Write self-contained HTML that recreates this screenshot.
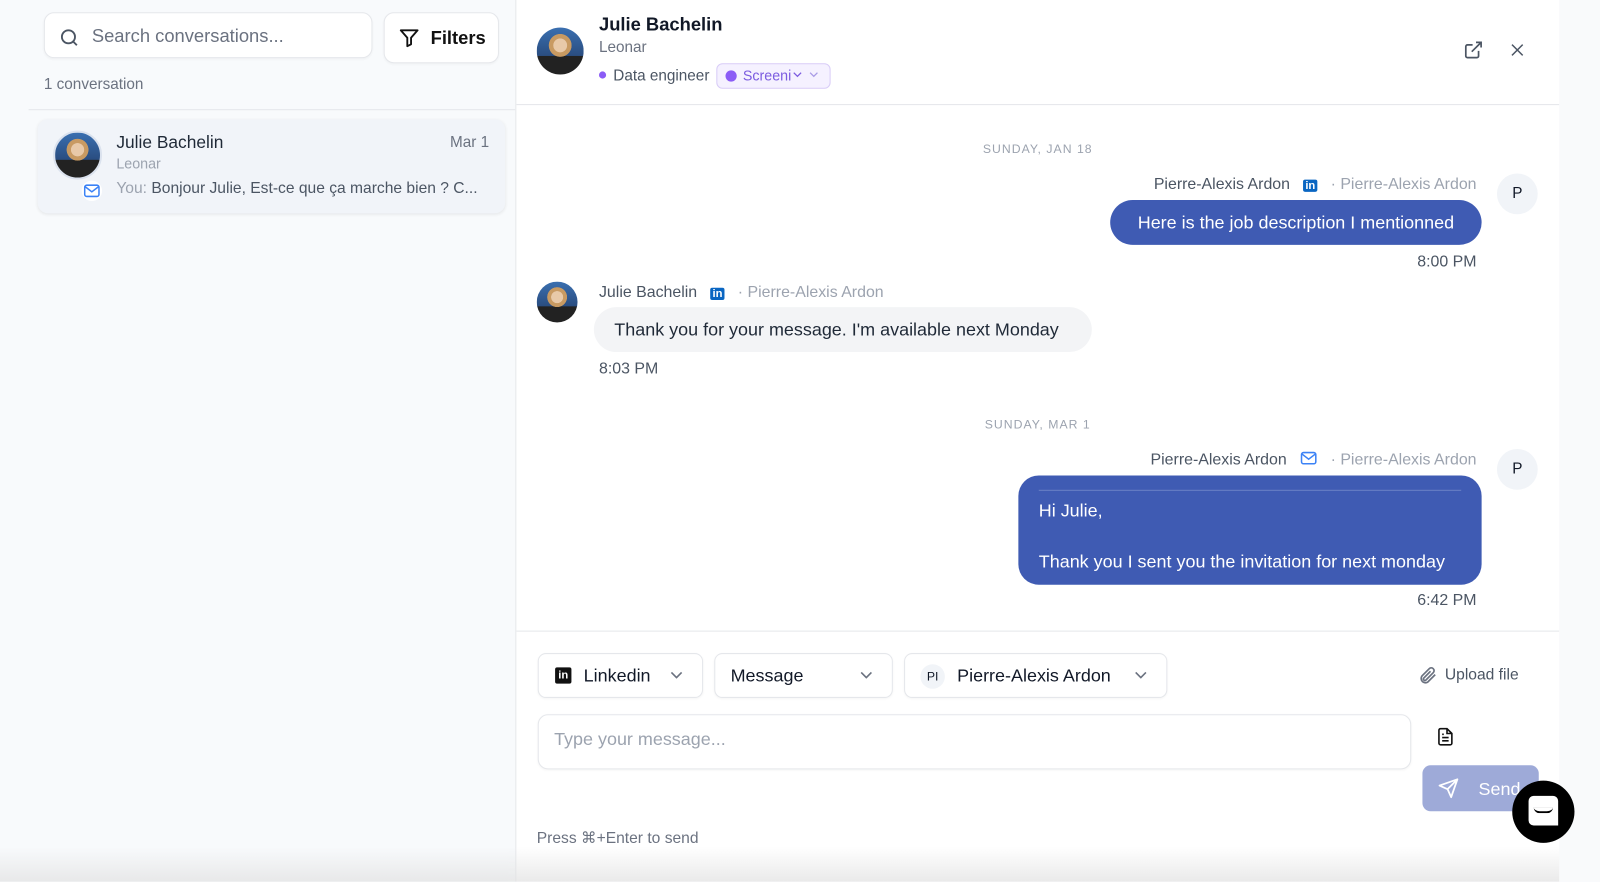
<!DOCTYPE html>
<html><head><meta charset="utf-8"><style>
*{box-sizing:border-box;margin:0;padding:0}
body{width:1600px;height:864px;overflow:hidden;background:#f8fafc;font-family:"Liberation Sans",sans-serif;color:#111827}
#w{position:absolute;left:0;top:0;width:1568px;height:847px;transform:scale(1.0204);transform-origin:0 0}
.a{position:absolute}
.av{border-radius:50%;background:radial-gradient(circle at 50% 38%,#e8c9a8 0 18%,#c89a62 19% 30%,transparent 31%),linear-gradient(#3a6fb0,#2a4d80 60%,#222 61%);}
.g{color:#6b7280}
.btn{border:1px solid #e5e7eb;border-radius:8px;background:#fff;box-shadow:0 1px 2px rgba(0,0,0,.04)}
.bub{background:#3f5bb3;color:#fff;font-size:17.6px}
.meta{font-size:15.6px;color:#4b5563}
.meta span{color:#9ca3af}
</style></head><body><div id="w">
<div class="a btn" style="left:43px;top:12px;width:322px;height:45px;border-radius:10px"></div>
<svg class="a" style="left:57px;top:26px" width="22" height="22" viewBox="0 0 24 24" fill="none" stroke="#4b5563" stroke-width="2"><circle cx="11" cy="11" r="7"/><path d="M16 16l4 4"/></svg>
<div class="a g" style="left:90px;top:25px;font-size:18px">Search conversations...</div>
<div class="a btn" style="left:376px;top:12px;width:113px;height:50px;border-radius:10px"></div>
<svg class="a" style="left:390px;top:26px" width="22" height="22" viewBox="0 0 24 24" fill="none" stroke="#111" stroke-width="2" stroke-linejoin="round"><path d="M3 4h18l-7 8v7l-4 2v-9z"/></svg>
<div class="a" style="left:422px;top:27px;font-size:18px;font-weight:bold;color:#111">Filters</div>
<div class="a g" style="left:43px;top:74px;font-size:15px">1 conversation</div>
<div class="a" style="left:28px;top:107px;width:477px;height:1px;background:#e5e7eb"></div>
<div class="a" style="left:37px;top:117px;width:458px;height:92px;background:#f1f4f9;border-radius:10px;box-shadow:0 1px 3px rgba(0,0,0,.08)"></div>
<div class="a av" style="left:52px;top:128px;width:48px;height:48px;border:2px solid #dbe2ee"></div>
<div class="a" style="left:80px;top:177px;width:20px;height:20px;border-radius:50%;background:#fff"></div>
<svg class="a" style="left:82px;top:180px" width="16" height="14" viewBox="0 0 16 14" fill="none" stroke="#3b82f6" stroke-width="1.5"><rect x="1" y="1.5" width="14" height="11" rx="2"/><path d="M1.5 3l6.5 5 6.5-5"/></svg>
<div class="a" style="left:114px;top:130px;font-size:17px;color:#1f2937">Julie Bachelin</div>
<div class="a g" style="left:441px;top:131px;font-size:15px">Mar 1</div>
<div class="a" style="left:114px;top:152px;font-size:14px;color:#9ca3af">Leonar</div>
<div class="a" style="left:114px;top:176px;font-size:15.3px;color:#4b5563"><span style="color:#9ca3af">You:</span> Bonjour Julie, Est-ce que ça marche bien ? C...</div>
<div class="a" style="left:505px;top:0;width:1023px;height:864px;background:#fff;border-left:1px solid #e5e7eb"></div>
<div class="a" style="left:1528px;top:0;width:40px;height:864px;background:#f9fafb"></div>
<div class="a av" style="left:526px;top:27px;width:46px;height:46px"></div>
<div class="a" style="left:587px;top:14px;font-size:18px;font-weight:bold">Julie Bachelin</div>
<div class="a g" style="left:587px;top:38px;font-size:15px">Leonar</div>
<div class="a" style="left:587px;top:70px;width:7px;height:7px;border-radius:50%;background:#8b5cf6"></div>
<div class="a g" style="left:601px;top:66px;font-size:15px;color:#4b5563">Data engineer</div>
<div class="a" style="left:702px;top:62px;width:112px;height:25px;border:1px solid #d8ccf7;background:#f5f1ff;border-radius:6px"></div>
<div class="a" style="left:711px;top:69px;width:11px;height:11px;border-radius:50%;background:#8b5cf6"></div>
<div class="a" style="left:728px;top:66px;font-size:14px;color:#7c5ce0">Screeni</div>
<svg class="a" style="left:777px;top:70px" width="9" height="6" viewBox="0 0 10 6" fill="none" stroke="#7c5ce0" stroke-width="1.4"><path d="M1 1l4 4 4-4"/></svg>
<svg class="a" style="left:793px;top:70px" width="9" height="6" viewBox="0 0 10 6" fill="none" stroke="#a99be6" stroke-width="1.4"><path d="M1 1l4 4 4-4"/></svg>
<svg class="a" style="left:1434px;top:39px" width="20" height="20" viewBox="0 0 24 24" fill="none" stroke="#4b5563" stroke-width="2"><path d="M18 13v6a2 2 0 0 1-2 2H5a2 2 0 0 1-2-2V8a2 2 0 0 1 2-2h6M15 3h6v6M10 14L21 3"/></svg>
<svg class="a" style="left:1478px;top:40px" width="18" height="18" viewBox="0 0 24 24" fill="none" stroke="#4b5563" stroke-width="2"><path d="M5 5l14 14M19 5L5 19"/></svg>
<div class="a" style="left:506px;top:102px;width:1022px;height:1px;background:#e5e7eb"></div>
<div class="a" style="left:506px;top:139px;width:1022px;text-align:center;font-size:12px;letter-spacing:1px;color:#9ca3af">SUNDAY, JAN 18</div>
<div class="a meta" style="right:121px;top:172px">Pierre-Alexis Ardon &nbsp;&nbsp;<b style="background:#0a66c2;color:#fff;font-size:11px;padding:0 2px;border-radius:2px">in</b> &nbsp;&nbsp;<span>· Pierre-Alexis Ardon</span></div>
<div class="a" style="left:1467px;top:170px;width:40px;height:40px;border-radius:50%;background:#f1f4f8;text-align:center;line-height:40px;font-size:15px">P</div>
<div class="a bub" style="left:1088px;top:196px;width:364px;height:44px;border-radius:22px;line-height:44px;text-align:center">Here is the job description I mentionned</div>
<div class="a meta" style="right:121px;top:248px">8:00 PM</div>
<div class="a av" style="left:526px;top:276px;width:40px;height:40px"></div>
<div class="a meta" style="left:587px;top:278px">Julie Bachelin &nbsp;&nbsp;<b style="background:#0a66c2;color:#fff;font-size:11px;padding:0 2px;border-radius:2px">in</b> &nbsp;&nbsp;<span>· Pierre-Alexis Ardon</span></div>
<div class="a" style="left:582px;top:301px;width:488px;height:44px;border-radius:22px;background:#f3f4f6;line-height:44px;padding-left:20px;font-size:17.6px;color:#1f2937">Thank you for your message. I'm available next Monday</div>
<div class="a meta" style="left:587px;top:353px">8:03 PM</div>
<div class="a" style="left:506px;top:409px;width:1022px;text-align:center;font-size:12px;letter-spacing:1px;color:#9ca3af">SUNDAY, MAR 1</div>
<div class="a meta" style="right:121px;top:442px">Pierre-Alexis Ardon &nbsp;&nbsp;<svg width="17" height="14" viewBox="0 0 16 14" fill="none" stroke="#3b82f6" stroke-width="1.5" style="vertical-align:-1px"><rect x="1" y="1.5" width="14" height="11" rx="2"/><path d="M1.5 3l6.5 5 6.5-5"/></svg> &nbsp;&nbsp;<span>· Pierre-Alexis Ardon</span></div>
<div class="a" style="left:1467px;top:440px;width:40px;height:40px;border-radius:50%;background:#f1f4f8;text-align:center;line-height:40px;font-size:15px">P</div>
<div class="a bub" style="left:998px;top:466px;width:454px;height:107px;border-radius:20px;padding:22px 0 0 20px;line-height:25px">
<div class="a" style="left:20px;top:14px;right:20px;height:1px;background:#6a81c6"></div>Hi Julie,<br><br>Thank you I sent you the invitation for next monday</div>
<div class="a meta" style="right:121px;top:580px">6:42 PM</div>
<div class="a" style="left:506px;top:618px;width:1022px;height:1px;background:#e5e7eb"></div>
<div class="a btn" style="left:527px;top:640px;width:162px;height:44px"></div>
<div class="a" style="left:544px;top:654px;width:16px;height:16px;background:#111;border-radius:2px;color:#fff;font-size:11px;font-weight:bold;line-height:17px;text-align:center">in</div>
<div class="a" style="left:572px;top:652px;font-size:17.6px">Linkedin</div>
<svg class="a" style="left:657px;top:658px" width="12" height="7" viewBox="0 0 12 7" fill="none" stroke="#6b7280" stroke-width="1.6"><path d="M1 1l5 5 5-5"/></svg>
<div class="a btn" style="left:700px;top:640px;width:175px;height:44px"></div>
<div class="a" style="left:716px;top:652px;font-size:17.6px">Message</div>
<svg class="a" style="left:843px;top:658px" width="12" height="7" viewBox="0 0 12 7" fill="none" stroke="#6b7280" stroke-width="1.6"><path d="M1 1l5 5 5-5"/></svg>
<div class="a btn" style="left:886px;top:640px;width:258px;height:44px"></div>
<div class="a" style="left:902px;top:651px;width:24px;height:24px;border-radius:50%;background:#f1f4f8;font-size:12px;text-align:center;line-height:24px">PI</div>
<div class="a" style="left:938px;top:652px;font-size:17.6px">Pierre-Alexis Ardon</div>
<svg class="a" style="left:1112px;top:658px" width="12" height="7" viewBox="0 0 12 7" fill="none" stroke="#6b7280" stroke-width="1.6"><path d="M1 1l5 5 5-5"/></svg>
<svg class="a" style="left:1389px;top:652px" width="20" height="20" viewBox="0 0 24 24" fill="none" stroke="#6b7280" stroke-width="2"><path d="M21 11l-8.5 8.5a5 5 0 0 1-7-7L14 4a3.3 3.3 0 0 1 4.7 4.7L10 17.4a1.7 1.7 0 0 1-2.4-2.4L15.5 7"/></svg>
<div class="a" style="left:1416px;top:653px;font-size:15.3px;color:#4b5563">Upload file</div>
<div class="a btn" style="left:527px;top:700px;width:856px;height:54px;border-radius:10px"></div>
<div class="a" style="left:543px;top:714px;font-size:17.6px;color:#9ca3af">Type your message...</div>
<svg class="a" style="left:1407px;top:712px" width="19" height="20" viewBox="0 0 24 24" fill="none" stroke="#111" stroke-width="2"><path d="M14 2H6a2 2 0 0 0-2 2v16a2 2 0 0 0 2 2h12a2 2 0 0 0 2-2V8z M14 2v6h6 M8 13h8 M8 17h8 M8 9h2"/></svg>
<div class="a" style="left:1394px;top:750px;width:114px;height:45px;border-radius:8px;background:#9eaad8"></div>
<svg class="a" style="left:1409px;top:762px" width="21" height="21" viewBox="0 0 24 24" fill="none" stroke="#fff" stroke-width="2" stroke-linejoin="round"><path d="M22 2L11 13M22 2l-7 20-4-9-9-4z"/></svg>
<div class="a" style="left:1449px;top:763px;font-size:17.6px;color:#fff">Send</div>
<div class="a" style="left:1482px;top:765px;width:61px;height:61px;border-radius:50%;background:#000"></div>
<div class="a" style="left:1498px;top:780px;width:29px;height:29px;border-radius:5px 5px 0 5px;background:#fff"></div>
<div class="a" style="left:1503px;top:791px;width:19px;height:6px;border-bottom:2px solid #000;border-radius:0 0 10px 10px"></div>
<div class="a" style="left:526px;top:812px;font-size:15.3px;color:#6b7280">Press ⌘+Enter to send</div>
<div class="a" style="left:0;top:830px;width:1528px;height:34px;background:linear-gradient(rgba(240,240,240,0),rgba(225,225,225,.7))"></div>
</div></body></html>
